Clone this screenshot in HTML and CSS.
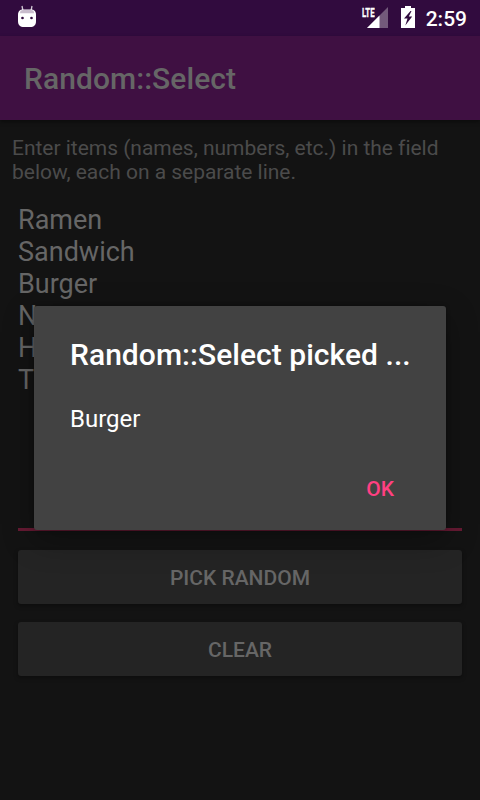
FILE: index.html
```
<!DOCTYPE html>
<html lang="en">
<head>
<meta charset="utf-8">
<title>Random::Select</title>
<link rel="stylesheet" href="styles.css">
</head>
<body>
<div class="screen">
  <header class="status">
    <svg class="robot" width="20" height="24" viewBox="0 0 20 24">
      <path d="M5 1l1 5M15 1l-1 5" stroke="#d3c9d6" stroke-width="1.3"/>
      <path d="M1 10C1 6 3 4.500 6 4.500h8c3 0 5 1.500 5 5.500v6c0 4-2 6-6 6H7c-4 0-6-2-6-6z" fill="#fff"/>
      <path d="M3 8.300C3 6 4 5 6 5h8c2 0 3 1 3 3.300z" fill="#c9bdcd"/>
      <circle cx="5.500" cy="13" r="1.350" fill="#310b3e"/>
      <circle cx="14.500" cy="13" r="1.350" fill="#310b3e"/>
    </svg>
    <div class="indicators">
      <div class="signal">
        <svg width="27" height="22" viewBox="0 0 27 22">
          <path d="M27 0v21H6z" fill="#735a7b"/>
          <path d="M18.500 8.500V21H6z" fill="#fff"/>
        </svg>
        <span class="lte">LTE</span>
      </div>
      <svg class="battery" width="14" height="22" viewBox="0 0 14 22">
        <path d="M4 0h6v2h4v20H0V2h4z" fill="#fff"/>
        <path d="M9.500 5L3 12.500h3.500L4.300 19.500 11.200 10.500H7.800L10.500 5z" fill="#310b3e"/>
      </svg>
      <span class="clock">2:59</span>
    </div>
  </header>
  <div class="appbar"><h1>Random::Select</h1></div>
  <main class="content">
    <p class="hint">Enter items (names, numbers, etc.) in the field<br>below, each on a separate line.</p>
    <div class="items">Ramen<br>Sandwich<br>Burger<br>N<br>H<br>T</div>
    <button class="button">PICK RANDOM</button>
    <button class="button">CLEAR</button>
  </main>
  <section class="dialog" role="dialog">
    <h2>Random::Select picked ...</h2>
    <p>Burger</p>
    <button class="ok">OK</button>
  </section>
</div>
</body>
</html>
```
FILE: styles.css
```
* { box-sizing: border-box; }
body { margin: 0; background: #131313; font-family: Roboto, sans-serif; }
h1, h2, p { margin: 0; }
button { border: 0; font-family: inherit; padding: 0; }
.screen { position: relative; width: 480px; height: 800px; overflow: hidden; background: #131313; }
.status { display: flex; justify-content: space-between; height: 36px; padding: 5px 13px 0 17px; background: #310b3e; }
.indicators { display: flex; align-items: flex-start; }
.signal { position: relative; width: 27px; height: 22px; margin: 2px 13px 0 0; }
.signal svg { display: block; }
.lte { position: absolute; left: 1px; top: 0; font-size: 12px; line-height: 12px; font-weight: 700; color: #fff; transform: scaleX(.65); transform-origin: left; -webkit-text-stroke: .3px #fff; }
.battery { margin: 1px 11px 0 0; }
.clock { color: #fff; font-size: 21px; line-height: 28px; font-weight: 500; }
.appbar { height: 84px; padding: 25px 24px; background: #3f1042; box-shadow: 0 2px 4px rgba(0, 0, 0, .4); }
h1 { color: #666; font-size: 30px; line-height: 35px; font-weight: 500; letter-spacing: .06px; }
.content { display: flex; flex-direction: column; padding: 16px 18px; }
.hint { margin: 0 -6px; font-size: 21px; line-height: 24px; color: #4b4b4b; white-space: nowrap; letter-spacing: -.02px; }
.items { height: 327px; margin: 20px 0 19px; color: #666; font-size: 27px; line-height: 32px; border-bottom: 3px solid #661a33; }
.button { height: 54px; margin-bottom: 18px; padding-top: 2px; border-radius: 3px; background: #242424; color: #666; font-size: 21px; font-weight: 500; box-shadow: 0 2px 4px rgba(0, 0, 0, .35); }
.dialog { position: absolute; left: 34px; top: 306px; width: 412px; height: 224px; padding: 31px 36px; border-radius: 3px; background: #424242; box-shadow: 0 10px 32px rgba(0, 0, 0, .3), 0 0 4px rgba(0, 0, 0, .3); display: flex; flex-direction: column; }
h2 { color: #fff; font-size: 30px; line-height: 35px; font-weight: 500; white-space: nowrap; letter-spacing: .04px; }
.dialog p { margin-top: 33px; color: #fff; font-size: 24px; line-height: 28px; }
.ok { align-self: flex-end; margin: 44px 16px 0 0; background: none; color: #ff4081; font-size: 21px; line-height: 24px; font-weight: 500; }
```
